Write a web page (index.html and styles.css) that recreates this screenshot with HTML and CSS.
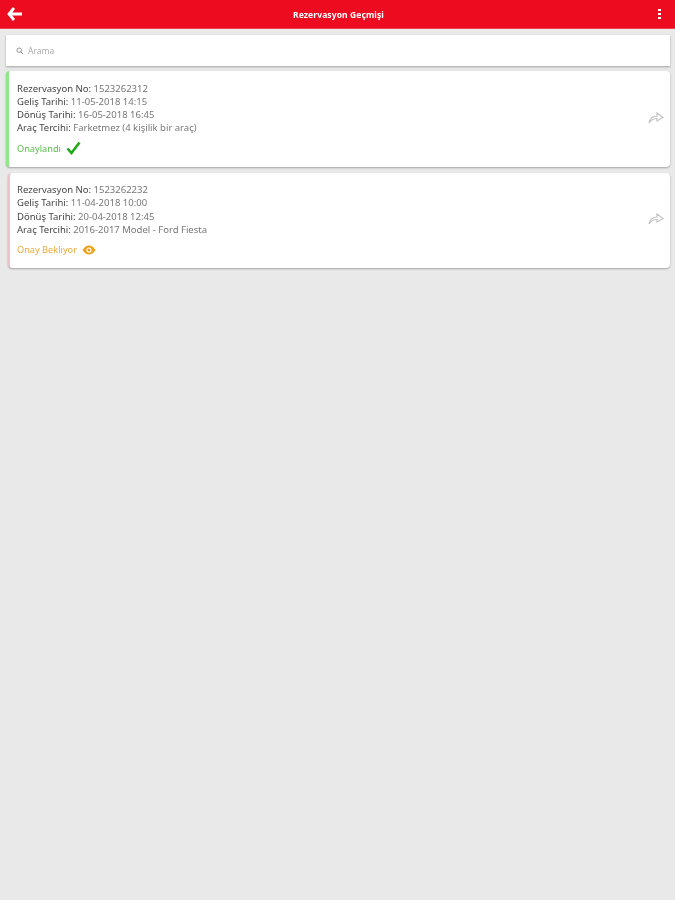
FILE: index.html
```html
<!DOCTYPE html>
<html lang="tr">
<head>
  <meta charset="UTF-8" />
  <meta name="viewport" content="width=device-width, initial-scale=1.0" />
  <title>Rezervasyon Geçmişi</title>
  <link rel="stylesheet" href="styles.css">
</head>
<body>
  <header class="ust-bar">
    <svg class="geri" viewBox="0 0 16 14" aria-label="Geri">
      <path d="M7 1 2 7l5 6M2.500 7H15" fill="none" stroke="#fff" stroke-width="2.800" />
    </svg>
    <h1>Rezervasyon Geçmişi</h1>
    <div class="menu" aria-label="Menü"><span></span><span></span><span></span></div>
  </header>

  <div class="arama">
    <svg class="arama-ikon" viewBox="0 0 10 10">
      <circle cx="4" cy="4" r="2.800" fill="none" stroke="#777" stroke-width="1" />
      <path d="M6 6l3 3" stroke="#777" stroke-width="1.100" />
    </svg>
    <span>Arama</span>
  </div>

  <div class="kart onayli">
    <div class="bilgi">
      <p><b>Rezervasyon No:</b> 1523262312</p>
      <p><b>Geliş Tarihi:</b> 11-05-2018 14:15</p>
      <p><b>Dönüş Tarihi:</b> 16-05-2018 16:45</p>
      <p><b>Araç Tercihi:</b> Farketmez (4 kişilik bir araç)</p>
      <div class="durum yesil">
        Onaylandı
        <svg class="tik" viewBox="0 0 15 14">
          <path d="M1.500 7.500 5.500 12 13.500 1.500" fill="none" stroke="#22a81a" stroke-width="2.600" />
        </svg>
      </div>
    </div>
    <svg class="paylas" viewBox="0 0 16 13">
      <path d="M1 12C2 7 5 5 9 5V2l6 4.500L9 10V7.500C6 7.500 3 9 1 12Z" fill="none" stroke="#c4c4c4" stroke-width="1.200" />
    </svg>
  </div>

  <div class="kart bekliyor">
    <div class="bilgi">
      <p><b>Rezervasyon No:</b> 1523262232</p>
      <p><b>Geliş Tarihi:</b> 11-04-2018 10:00</p>
      <p><b>Dönüş Tarihi:</b> 20-04-2018 12:45</p>
      <p><b>Araç Tercihi:</b> 2016-2017 Model - Ford Fiesta</p>
      <div class="durum turuncu">
        Onay Bekliyor
        <svg class="goz" viewBox="0 0 14 10">
          <path d="M.5 5C2.500 1.800 4.700.5 7 .5s4.500 1.300 6.500 4.500C11.500 8.200 9.300 9.500 7 9.500S2.500 8.200.5 5Z" fill="#eea21c" />
          <circle cx="7" cy="5" r="2.600" fill="#fff" />
          <circle cx="7" cy="5" r="1.500" fill="#eea21c" />
        </svg>
      </div>
    </div>
    <svg class="paylas" viewBox="0 0 16 13">
      <path d="M1 12C2 7 5 5 9 5V2l6 4.500L9 10V7.500C6 7.500 3 9 1 12Z" fill="none" stroke="#c4c4c4" stroke-width="1.200" />
    </svg>
  </div>
</body>
</html>
```

FILE: styles.css
```css
* {
  margin: 0;
  padding: 0;
  box-sizing: border-box;
}

body {
  font-family: "Noto Sans", "Open Sans", sans-serif;
  background: #e9e9e9;
  color: #777;
  height: 900px;
  overflow: hidden;
}

/* Ekran görüntüsü bulanık, hafif yumuşatma */
body > * {
  filter: blur(0.4px);
}

.ust-bar {
  height: 29px;
  background: #ec0b1f;
  border-bottom: 1px solid #f04050;
  display: flex;
  align-items: center;
  justify-content: space-between;
  padding: 0 14px 0 7px;
}

.ust-bar h1 {
  font-size: 8.500px;
  font-weight: 700;
  color: #fff;
  letter-spacing: 0.1px;
  margin-right: 4px;
}

.geri {
  width: 16px;
  height: 14px;
}

.menu {
  display: flex;
  flex-direction: column;
  gap: 1.500px;
  width: 3px;
}

.menu span {
  height: 2.500px;
  background: #fff;
}

.arama {
  margin: 6px 5px 0 6px;
  height: 31px;
  background: #fff;
  box-shadow: 0 1px 2px rgba(0, 0, 0, 0.3);
  display: flex;
  align-items: center;
  gap: 4px;
  padding-left: 10px;
  font-size: 8.500px;
  color: #aaa;
}

.arama-ikon {
  width: 8px;
  height: 8px;
}

.kart {
  background: #fff;
  border-radius: 4px;
  box-shadow: 0 1px 2px rgba(0, 0, 0, 0.3);
  display: flex;
  align-items: center;
  justify-content: space-between;
  padding-right: 6px;
}

.onayli {
  height: 96px;
  margin: 5px 5px 0 6px;
  border-left: 3px solid #8fe887;
}

.bekliyor {
  height: 95px;
  margin: 6px 5px 0 8px;
  border-left: 2px solid #ecc4c8;
}

.bilgi {
  padding-left: 8px;
  font-size: 9.500px;
  line-height: 13.200px;
}

.bilgi b {
  font-weight: 400;
  color: #444;
}

.bekliyor .bilgi {
  padding-left: 7px;
}

.durum {
  display: flex;
  align-items: center;
  gap: 5px;
  margin-top: 6px;
  height: 16px;
  font-size: 9.200px;
}

.yesil {
  color: #5bc04f;
}

.turuncu {
  color: #f0aa3c;
}

.tik {
  width: 15px;
  height: 14px;
}

.goz {
  width: 14px;
  height: 10px;
}

.paylas {
  width: 16px;
  height: 13px;
  margin-bottom: 4px;
}
```
